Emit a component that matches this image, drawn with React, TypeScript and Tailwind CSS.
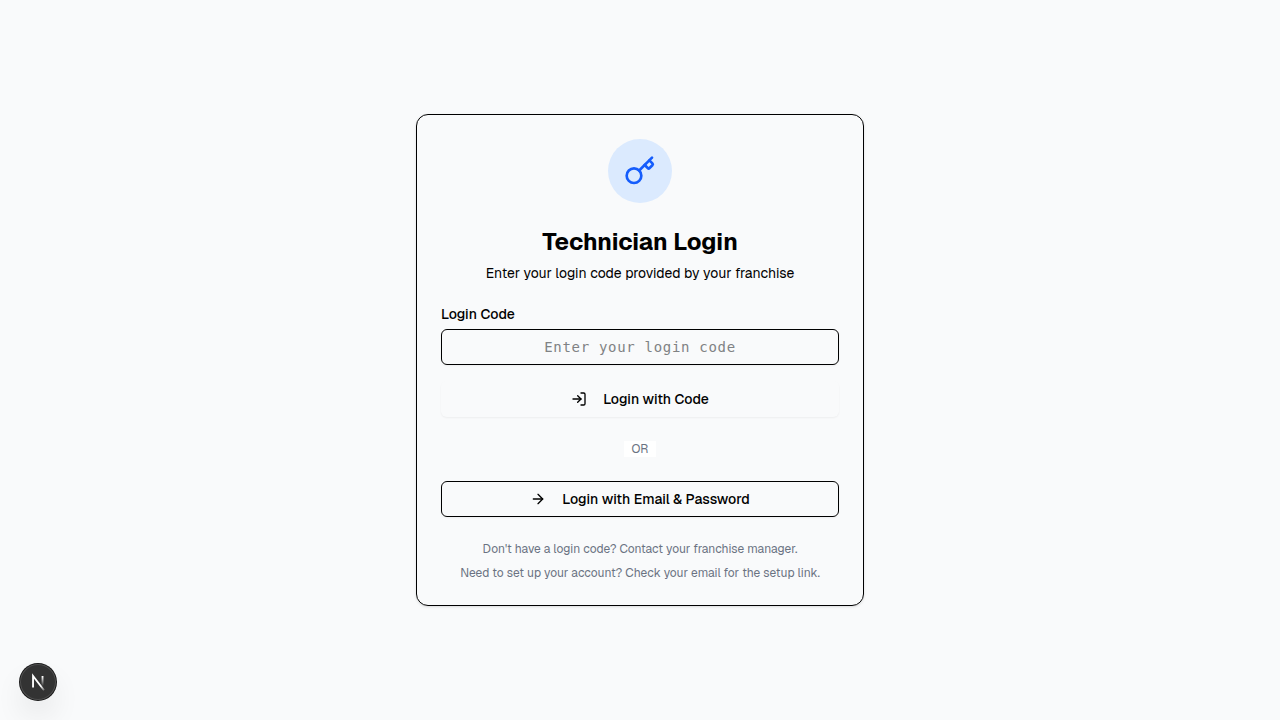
import { ArrowRight, Key, LogIn } from "lucide-react";

function NextBadge() {
  return (
    <button
      type="button"
      aria-label="Open developer tools"
      className="fixed bottom-5 left-5 size-9 rounded-full bg-[#333333] shadow-[0_0_0_1px_#171717,inset_0_0_0_1px_rgba(255,255,255,0.14),0_16px_32px_-8px_rgba(0,0,0,0.24)]"
    >
      <svg className="size-9" viewBox="0 0 36 36" fill="none" aria-hidden="true">
        <defs>
          <linearGradient id="diagonal" x1="9.96" y1="11.12" x2="15.48" y2="17.97" gradientUnits="userSpaceOnUse">
            <stop stopColor="white" />
            <stop offset="0.85" stopColor="white" stopOpacity="0" />
            <stop offset="1" stopColor="white" stopOpacity="0" />
          </linearGradient>
          <linearGradient id="stem" x1="11.82" y1="1.4" x2="11.79" y2="11" gradientUnits="userSpaceOnUse">
            <stop stopColor="white" />
            <stop offset="1" stopColor="white" stopOpacity="0" />
          </linearGradient>
        </defs>
        <g transform="translate(10.7 11)">
          <path d="M13.3 15.2 L2.34 1 V12.6" stroke="url(#diagonal)" strokeWidth="1.86" />
          <path d="M11.825 1 V12.6" stroke="url(#stem)" strokeWidth="1.86" />
        </g>
      </svg>
    </button>
  );
}

export default function App() {
  return (
    <div className="flex min-h-screen items-center justify-center bg-gray-50 p-4 font-['Geist','Inter',sans-serif] text-black antialiased">
      <main className="w-full max-w-md rounded-xl border border-black p-6 shadow-sm">
        <header className="flex flex-col items-center gap-1.5 text-center">
          <div className="mb-4.5 flex size-16 items-center justify-center rounded-full bg-blue-100">
            <Key className="size-8 text-blue-600" />
          </div>
          <h1 className="text-2xl leading-[30px] font-bold">Technician Login</h1>
          <p className="text-sm">Enter your login code provided by your franchise</p>
        </header>

        <form className="mt-6 flex flex-col gap-4" onSubmit={(event) => event.preventDefault()}>
          <div className="flex flex-col gap-2">
            <label htmlFor="login-code" className="text-sm leading-none font-medium">
              Login Code
            </label>
            <input
              id="login-code"
              type="text"
              placeholder="Enter your login code"
              className="h-9 w-full rounded-md border border-black px-3 text-center font-['DejaVu_Sans_Mono',monospace] text-sm tracking-wider shadow-xs placeholder:text-[#808284]"
            />
          </div>
          <button
            type="submit"
            className="flex h-9 w-full items-center justify-center gap-4 rounded-md text-sm font-medium shadow-xs"
          >
            <LogIn className="size-4" />
            Login with Code
          </button>
        </form>

        <div className="my-6 text-center text-xs">
          <span className="inline-block bg-white px-2 text-gray-500">OR</span>
        </div>

        <button
          type="button"
          className="flex h-9 w-full items-center justify-center gap-4 rounded-md border border-black text-sm font-medium shadow-xs"
        >
          <ArrowRight className="size-4" />
          Login with Email &amp; Password
        </button>

        <footer className="mt-6 flex flex-col gap-2 text-center text-xs text-gray-500">
          <p>Don't have a login code? Contact your franchise manager.</p>
          <p>Need to set up your account? Check your email for the setup link.</p>
        </footer>
      </main>
      <NextBadge />
    </div>
  );
}
